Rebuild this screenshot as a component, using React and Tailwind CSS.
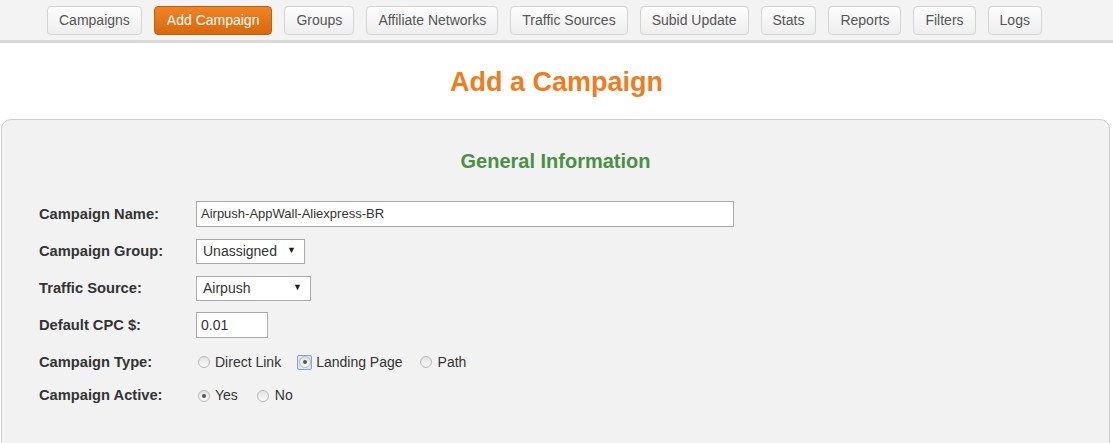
import React from "react";

const tabs = [
  "Campaigns",
  "Add Campaign",
  "Groups",
  "Affiliate Networks",
  "Traffic Sources",
  "Subid Update",
  "Stats",
  "Reports",
  "Filters",
  "Logs",
];

function Radio({ checked = false, focused = false, label }) {
  return (
    <label className="flex items-center gap-[4px]">
      <span
        className={
          focused
            ? "flex h-[15px] w-[15px] items-center justify-center rounded-[2px] border border-[#7ea6d8] bg-[#dbe7f6]"
            : "flex h-[15px] w-[15px] items-center justify-center"
        }
      >
        <span className="flex h-[12px] w-[12px] items-center justify-center rounded-full border border-[#b8b8b8] bg-gradient-to-b from-[#e2e2e2] to-[#fafafa]">
          {checked && <span className="h-[4px] w-[4px] rounded-full bg-[#555]" />}
        </span>
      </span>
      <span>{label}</span>
    </label>
  );
}

function Select({ value, width }) {
  return (
    <div
      className={`flex h-[25px] items-center justify-between border border-[#a9a9a9] bg-white pl-[6px] pr-[8px] text-[14px] ${width}`}
    >
      <span>{value}</span>
      <span className="text-[9px] text-[#222]">▼</span>
    </div>
  );
}

function Row({ label, children, h = "h-[37px]" }) {
  return (
    <div className={`flex items-center ${h}`}>
      <div className="w-[157px] text-[14.7px] font-bold text-[#333]">{label}</div>
      <div className="flex items-center">{children}</div>
    </div>
  );
}

export default function App() {
  return (
    <div className="h-[443px] overflow-hidden bg-white font-['Liberation_Sans',Arial,sans-serif] text-[14px] text-[#333]">
      {/* top nav */}
      <div className="flex h-[43px] items-start gap-[12px] border-b-[3px] border-[#d9d9d9] bg-[#f3f3f3] pl-[47px] pt-[6px]">
        {tabs.map((t) => (
          <div
            key={t}
            className={
              t === "Add Campaign"
                ? "flex h-[29px] items-center rounded-[4px] border border-[#c2600a] bg-gradient-to-b from-[#ef8323] to-[#d8690c] px-[12px] text-[14px] text-white"
                : "flex h-[29px] items-center rounded-[4px] border border-[#d4d4d4] bg-gradient-to-b from-[#fdfdfd] to-[#eeeeee] px-[11px] text-[14px] text-[#555]"
            }
          >
            {t}
          </div>
        ))}
      </div>

      <h1 className="mt-[19px] text-center text-[27px] font-bold text-[#f07c1b]">
        Add a Campaign
      </h1>

      <div className="ml-[1px] mr-[3px] mt-[16px] h-[400px] rounded-[10px] border border-[#cfcfcf] bg-[#f2f2f2] pl-[37px] pt-[26px]">
        <h2 className="pr-[37px] text-center text-[20px] font-bold text-[#4a9044]">
          General Information
        </h2>

        <div className="mt-[20px]">
          <Row label="Campaign Name:">
            <div className="flex h-[26px] w-[538px] items-center border border-[#a9a9a9] bg-white px-[4px] text-[13px]">
              Airpush-AppWall-Aliexpress-BR
            </div>
          </Row>
          <Row label="Campaign Group:">
            <Select value="Unassigned" width="w-[109px]" />
          </Row>
          <Row label="Traffic Source:">
            <Select value="Airpush" width="w-[115px]" />
          </Row>
          <Row label="Default CPC $:">
            <div className="flex h-[26px] w-[72px] items-center border border-[#a9a9a9] bg-white px-[4px] text-[14px]">
              0.01
            </div>
          </Row>
          <Row label="Campaign Type:">
            <div className="flex items-center gap-[16px]">
              <Radio label="Direct Link" />
              <Radio label="Landing Page" checked focused />
              <Radio label="Path" />
            </div>
          </Row>
          <Row label="Campaign Active:" h="h-[30px]">
            <div className="flex items-center gap-[18px]">
              <Radio label="Yes" checked />
              <Radio label="No" />
            </div>
          </Row>
        </div>
      </div>
    </div>
  );
}
